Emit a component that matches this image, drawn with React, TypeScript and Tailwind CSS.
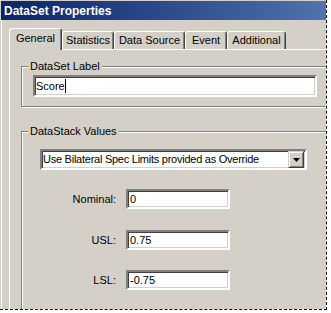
import React from "react";

function Field({ w, h, text, caret, pl }: { w: string; h: string; text: string; caret?: boolean; pl: string }) {
  return (
    <div
      className={`${w} ${h} ${pl} bg-white border-2 border-t-[#808080] border-l-[#808080] border-b-white border-r-white shadow-[inset_1px_1px_0_#404040,inset_-1px_-1px_0_#d4d0c8] flex items-center leading-[13px]`}
    >
      <span>{text}</span>
      {caret && <span className="w-px h-[14px] bg-black" />}
    </div>
  );
}

function Tab({ label, w, selected }: { label: string; w: string; selected?: boolean }) {
  if (selected) {
    return (
      <div
        className={`${w} h-[22px] -mb-px relative z-10 bg-[#d4d0c8] border-t border-l border-white border-r border-r-[#404040] rounded-t-[3px] shadow-[inset_-1px_0_0_#808080] flex items-center justify-center pb-[3px]`}
      >
        {label}
      </div>
    );
  }
  return (
    <div
      className={`${w} h-[18px] border-t border-l border-white border-r border-r-[#404040] rounded-t-[3px] shadow-[inset_-1px_0_0_#808080] flex items-center justify-center`}
    >
      {label}
    </div>
  );
}

export default function App() {
  return (
    <div className="w-[331px] h-[313px] bg-white overflow-hidden font-['Liberation_Sans',Arial,sans-serif] text-[11px] text-black">
      <div className="w-[327px] h-[310px] border-r border-b border-dashed border-black bg-[#d4d0c8] bg-clip-padding overflow-hidden pt-px pl-px flex flex-col">
        <div className="h-[19px] shrink-0 bg-gradient-to-r from-[#0a246a] to-[#5072ae] flex items-center pl-[3px] text-white font-bold text-[12px]">
          DataSet Properties
        </div>
        <div className="flex-1 border-l border-white pt-[8px] pl-[7px] flex flex-col">
          <div className="flex items-end h-[21px] shrink-0">
            <Tab label="General" w="w-[53px]" selected />
            <Tab label="Statistics" w="w-[52px]" />
            <Tab label="Data Source" w="w-[71px]" />
            <Tab label="Event" w="w-[42px]" />
            <Tab label="Additional" w="w-[59px]" />
          </div>
          <div className="border-t border-l border-white pl-[11px] w-[400px] h-[300px] shrink-0">
            <div className="relative mt-[16px] w-[320px] h-[41px] border border-[#808080] shadow-[inset_1px_1px_0_#fff,1px_1px_0_#fff] pt-[8px] pl-[11px]">
              <span className="absolute -top-[7px] left-[6px] px-[2px] bg-[#d4d0c8] leading-[13px]">DataSet Label</span>
              <Field w="w-[284px]" h="h-[22px]" pl="pl-px" text="Score" caret />
            </div>
            <div className="relative mt-[24px] w-[320px] h-[300px] border border-[#808080] shadow-[inset_1px_1px_0_#fff,1px_1px_0_#fff] pt-[17px] pl-[18px]">
              <span className="absolute -top-[7px] left-[6px] px-[2px] bg-[#d4d0c8] leading-[13px]">DataStack Values</span>
              <div className="w-[267px] h-[21px] bg-white border-2 border-t-[#808080] border-l-[#808080] border-b-white border-r-white shadow-[inset_1px_1px_0_#404040,inset_-1px_-1px_0_#d4d0c8] flex items-center justify-between">
                <span className="pl-px leading-[13px] whitespace-nowrap tracking-[-0.25px]">Use Bilateral Spec Limits provided as Override</span>
                <div className="w-[16px] h-[17px] mr-px bg-[#d4d0c8] border border-[#d4d0c8] border-b-[#404040] border-r-[#404040] shadow-[inset_1px_1px_0_#fff,inset_-1px_-1px_0_#808080] flex items-center justify-center">
                  <svg width="7" height="4" viewBox="0 0 7 4" className="block">
                    <path d="M0 0H7L3.5 4Z" fill="#000" />
                  </svg>
                </div>
              </div>
              <div className="mt-[19px] flex items-center">
                <div className="w-[76px] text-right leading-[13px]">Nominal:</div>
                <div className="ml-[10px]">
                  <Field w="w-[104px]" h="h-[20px]" pl="pl-[2px]" text="0" />
                </div>
              </div>
              <div className="mt-[21px] flex items-center">
                <div className="w-[76px] text-right leading-[13px]">USL:</div>
                <div className="ml-[10px]">
                  <Field w="w-[104px]" h="h-[20px]" pl="pl-[2px]" text="0.75" />
                </div>
              </div>
              <div className="mt-[20px] flex items-center">
                <div className="w-[76px] text-right leading-[13px]">LSL:</div>
                <div className="ml-[10px]">
                  <Field w="w-[104px]" h="h-[20px]" pl="pl-[2px]" text="-0.75" />
                </div>
              </div>
            </div>
          </div>
        </div>
      </div>
    </div>
  );
}
